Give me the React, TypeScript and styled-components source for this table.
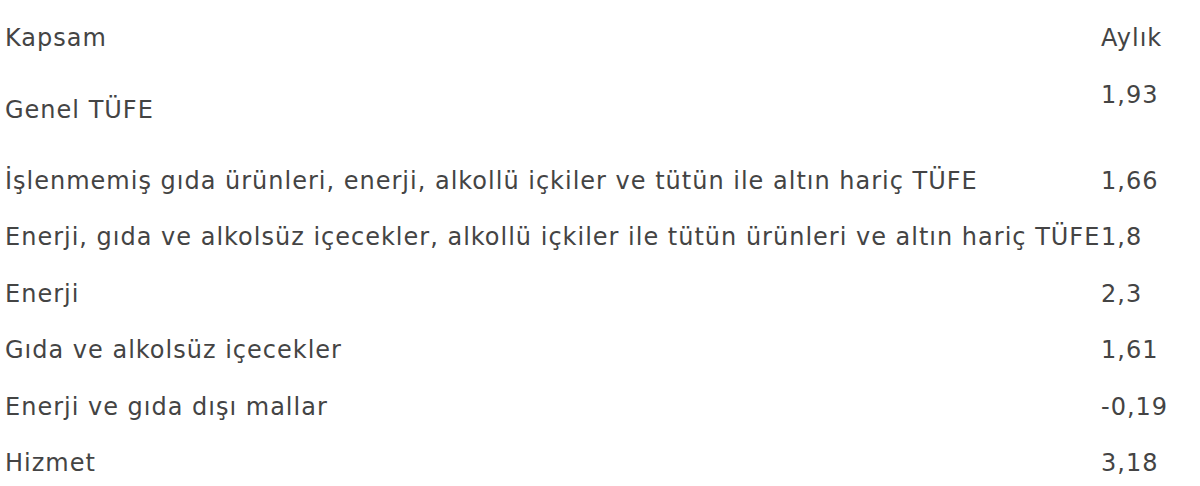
import * as React from "react";
import styled, { createGlobalStyle } from "styled-components";

interface Rate {
  label: string;
  monthly: string;
  tall?: boolean;
}

const rates: Rate[] = [
  { label: "Genel TÜFE", monthly: "1,93", tall: true },
  {
    label:
      "İşlenmemiş gıda ürünleri, enerji, alkollü içkiler ve tütün ile altın hariç TÜFE",
    monthly: "1,66",
  },
  {
    label:
      "Enerji, gıda ve alkolsüz içecekler, alkollü içkiler ile tütün ürünleri ve altın hariç TÜFE",
    monthly: "1,8",
  },
  { label: "Enerji", monthly: "2,3" },
  { label: "Gıda ve alkolsüz içecekler", monthly: "1,61" },
  { label: "Enerji ve gıda dışı mallar", monthly: "-0,19" },
  { label: "Hizmet", monthly: "3,18" },
];

const GlobalStyle = createGlobalStyle`
  body {
    margin: 0;
    background: #ffffff;
    font-family: "DejaVu Sans", "Liberation Sans", sans-serif;
    color: #444444;
  }
`;

export default function App() {
  return (
    <>
      <GlobalStyle />
      <Table>
        <Row>
          <Cell>Kapsam</Cell>
          <Cell>Aylık</Cell>
        </Row>
        {rates.map((rate) => (
          <Row key={rate.label} $tall={rate.tall}>
            <Cell>{rate.label}</Cell>
            <Value $top={rate.tall}>{rate.monthly}</Value>
          </Row>
        ))}
      </Table>
    </>
  );
}

const Table = styled.div`
  display: flex;
  flex-direction: column;
  padding: 10px 0 0 5px;
  width: 1195px;
  box-sizing: border-box;
`;

const Row = styled.div<{ $tall?: boolean }>`
  display: grid;
  grid-template-columns: 1096px 1fr;
  align-items: center;
  height: ${(p) => (p.$tall ? "86px" : "56.5px")};
`;

const Cell = styled.div`
  font-size: 24px;
  line-height: 30px;
  letter-spacing: 1px;
  white-space: nowrap;
`;

const Value = styled(Cell)<{ $top?: boolean }>`
  align-self: ${(p) => (p.$top ? "start" : "center")};
  padding-top: ${(p) => (p.$top ? "13px" : "0")};
`;
